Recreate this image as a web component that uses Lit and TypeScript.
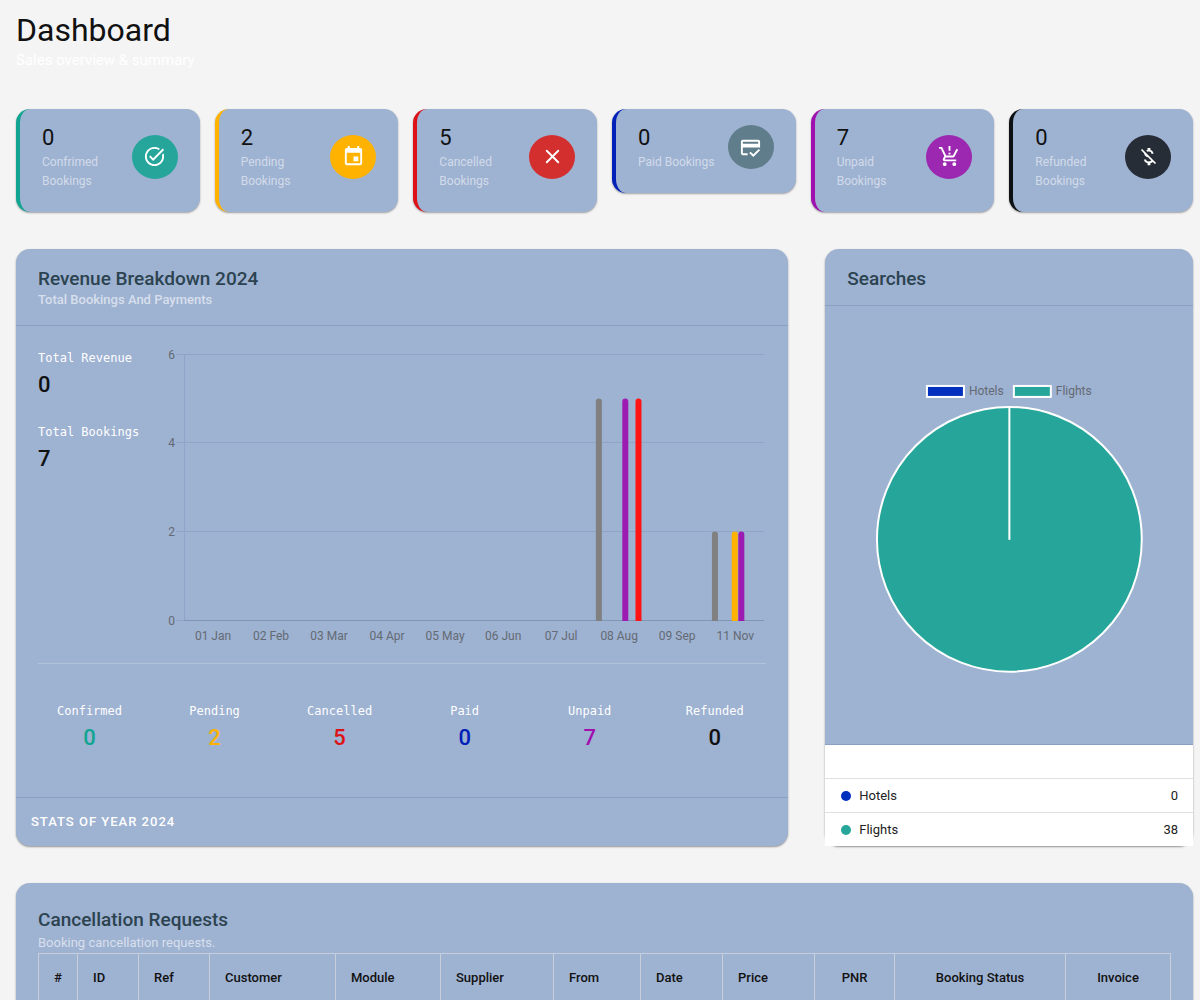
import { LitElement, html, svg, css } from "lit";
import { customElement, property } from "lit/decorators.js";
import { classMap } from "lit/directives/class-map.js";

type Tone = "teal" | "amber" | "red" | "blue" | "purple" | "black";

interface Summary {
  tone: Tone;
  value: number;
  label: string;
  title: string;
}

const SUMMARY: Summary[] = [
  { tone: "teal", value: 0, label: "Confrimed Bookings", title: "Confirmed" },
  { tone: "amber", value: 2, label: "Pending Bookings", title: "Pending" },
  { tone: "red", value: 5, label: "Cancelled Bookings", title: "Cancelled" },
  { tone: "blue", value: 0, label: "Paid Bookings", title: "Paid" },
  { tone: "purple", value: 7, label: "Unpaid Bookings", title: "Unpaid" },
  { tone: "black", value: 0, label: "Refunded Bookings", title: "Refunded" },
];

const ICONS = {
  teal: svg`<path d="M22 5.18L10.59 16.6l-4.24-4.24 1.41-1.41 2.83 2.83 10-10L22 5.18zm-2.21 5.04c.13.57.21 1.17.21 1.78 0 4.42-3.58 8-8 8s-8-3.58-8-8 3.58-8 8-8c1.58 0 3.04.46 4.28 1.25l1.44-1.44C16.1 2.67 14.13 2 12 2 6.48 2 2 6.48 2 12s4.48 10 10 10 10-4.48 10-10c0-1.19-.22-2.33-.6-3.39l-1.61 1.61z"/>`,
  amber: svg`<path d="M17 12h-5v5h5v-5zM16 1v2H8V1H6v2H5c-1.11 0-1.99.9-1.99 2L3 19c0 1.1.89 2 2 2h14c1.1 0 2-.9 2-2V5c0-1.1-.9-2-2-2h-1V1h-2zm3 18H5V8h14v11z"/>`,
  red: svg`<path d="M6 6L18 18M18 6L6 18" fill="none" stroke="currentColor" stroke-width="2" stroke-linecap="round"/>`,
  blue: svg`<path d="M20 4H4c-1.11 0-1.99.89-1.99 2L2 18c0 1.11.89 2 2 2h5v-2H4v-6h18V6c0-1.11-.89-2-2-2zm0 4H4V6h16v2zm-5.07 11.17l-2.83-2.83-1.41 1.41L14.93 22 22 14.93l-1.41-1.41-5.66 5.65z"/>`,
  purple: svg`<path d="M13 10h-2V8h2v2zm0-4h-2V1h2v5zM7 18c-1.1 0-1.99.9-1.99 2S5.9 22 7 22s2-.9 2-2-.9-2-2-2zm10 0c-1.1 0-1.99.9-1.99 2s.89 2 1.99 2 2-.9 2-2-.9-2-2-2zm-8.9-5h7.45c.75 0 1.41-.41 1.75-1.03L21 4.96 19.25 4l-3.7 7H8.53L4.27 2H1v2h2l3.6 7.59-1.35 2.44C4.52 15.37 5.48 17 7 17h12v-2H7l1.1-2z"/>`,
  black: svg`<path d="M12.5 6.9c1.78 0 2.44.85 2.5 2.1h2.21c-.07-1.72-1.12-3.3-3.21-3.81V3h-3v2.16c-.53.12-1.03.3-1.48.54l1.47 1.47c.41-.17.91-.27 1.51-.27zM5.33 4.06L4.06 5.33 7.5 8.77c0 2.08 1.56 3.21 3.91 3.91l3.51 3.51c-.34.48-1.05.91-2.42.91-2.06 0-2.87-.92-2.98-2.1h-2.2c.12 2.19 1.76 3.42 3.68 3.83V21h3v-2.15c.96-.18 1.82-.55 2.45-1.12l2.22 2.22 1.27-1.27L5.33 4.06z"/>`,
};

@customElement("summary-card")
export class SummaryCard extends LitElement {
  @property() tone: Tone = "teal";
  @property() label = "";
  @property({ type: Number }) value = 0;

  static styles = css`
    :host {
      display: block;
    }
    .card {
      display: flex;
      align-items: center;
      padding: 13px 22px 21px;
      border-left: 4px solid var(--accent);
      border-radius: 14px;
      background: #9eb2d2;
      box-shadow: 0 1px 2px rgba(0, 0, 0, 0.35);
    }
    .text {
      flex: 1;
      min-width: 0;
      padding-right: 12px;
    }
    .value {
      font-size: 22px;
      line-height: 31px;
      color: #111;
    }
    .label {
      font-size: 12px;
      line-height: 19px;
      color: rgba(255, 255, 255, 0.55);
    }
    .badge {
      flex: none;
      display: grid;
      place-items: center;
      width: 46px;
      height: 44px;
      border-radius: 50%;
      background: var(--disc);
      color: #fff;
    }
    .icon {
      width: 23px;
      height: 23px;
      fill: currentColor;
    }
    .teal { --accent: #10a590; --disc: #26a69a; }
    .amber { --accent: #ffb300; --disc: #ffb300; }
    .red { --accent: #dd1216; --disc: #d32f2f; }
    .blue { --accent: #0020b8; --disc: #607d8b; }
    .purple { --accent: #a010ae; --disc: #9c27b0; }
    .black { --accent: #0e1113; --disc: #262d36; }
  `;

  render() {
    return html`
      <div class=${classMap({ card: true, [this.tone]: true })}>
        <div class="text">
          <div class="value">${this.value}</div>
          <div class="label">${this.label}</div>
        </div>
        <div class="badge">
          <svg class="icon" viewBox="0 0 24 24" aria-hidden="true">${ICONS[this.tone]}</svg>
        </div>
      </div>
    `;
  }
}

const MONTHS = ["01 Jan", "02 Feb", "03 Mar", "04 Apr", "05 May", "06 Jun", "07 Jul", "08 Aug", "09 Sep", "11 Nov"];

// Each bar: month index, slot within the month (0-6), value, colour.
const BARS = [
  { month: 7, slot: 0, value: 5, color: "#808080" },
  { month: 7, slot: 4, value: 5, color: "#9c1bb0" },
  { month: 7, slot: 6, value: 5, color: "#ff1414" },
  { month: 9, slot: 0, value: 2, color: "#808080" },
  { month: 9, slot: 3, value: 2, color: "#ffb300" },
  { month: 9, slot: 4, value: 2, color: "#9c1bb0" },
];

@customElement("revenue-chart")
export class RevenueChart extends LitElement {
  static styles = css`
    :host {
      display: block;
    }
    .chart {
      display: block;
      width: 100%;
      height: auto;
    }
    .line {
      stroke: #8fa4c6;
      stroke-width: 1;
    }
    .base {
      stroke: #8195b4;
    }
    .tick {
      font-size: 12px;
      fill: #646a73;
    }
    .end {
      text-anchor: end;
    }
    .mid {
      text-anchor: middle;
    }
  `;

  render() {
    const left = 24;
    const bottom = 281;
    const unit = 44.4;
    const step = 58;
    const y = (v: number) => Math.round(bottom - v * unit) - 0.5;
    return html`
      <svg class="chart" viewBox="0 0 606 310" role="img" aria-label="Bookings by month">
        ${[6, 4, 2, 0].map(
          (v) => svg`
            <line class="line" x1="16" x2="604" y1=${y(v)} y2=${y(v)} />
            <text class="tick end" x="15" y=${y(v) + 4}>${v}</text>`
        )}
        <line class="line" x1="24.5" x2="24.5" y1=${y(6)} y2=${y(0)} />
        <line class="line base" x1=${left} x2="604" y1=${y(0)} y2=${y(0)} />
        ${MONTHS.map(
          (m, i) => svg`<text class="tick mid" x=${left + step * (i + 0.5)} y="300">${m}</text>`
        )}
        ${BARS.map((b) => {
          const x = left + b.month * step + 5.7 + b.slot * 6.6;
          const top = y(b.value);
          return svg`<path fill=${b.color} d="M${x} ${y(0) + 0.5}V${top + 3}a3 3 0 0 1 3-3a3 3 0 0 1 3 3V${y(0) + 0.5}z" />`;
        })}
      </svg>
    `;
  }
}

@customElement("search-pie")
export class SearchPie extends LitElement {
  static styles = css`
    :host {
      display: block;
    }
    .pie {
      display: block;
      width: 100%;
      height: auto;
    }
    .key {
      stroke: #fff;
      stroke-width: 2;
    }
    .name {
      font-size: 12px;
      fill: #646a73;
    }
    .hotels {
      fill: #0030bd;
    }
    .flights {
      fill: #26a69a;
    }
  `;

  render() {
    return html`
      <svg class="pie" viewBox="0 0 368 438" role="img" aria-label="Hotels 0, Flights 38">
        <rect class="key hotels" x="102" y="80" width="37" height="11" />
        <text class="name" x="144" y="89">Hotels</text>
        <rect class="key flights" x="189" y="80" width="37" height="11" />
        <text class="name" x="231" y="89">Flights</text>
        <circle class="key flights" cx="184.5" cy="233.5" r="132.5" />
        <path class="key" d="M184.5 101V234" />
      </svg>
    `;
  }
}

const COLUMNS = [
  { name: "#", width: 39, centered: true },
  { name: "ID", width: 61 },
  { name: "Ref", width: 71 },
  { name: "Customer", width: 126 },
  { name: "Module", width: 105 },
  { name: "Supplier", width: 113 },
  { name: "From", width: 87 },
  { name: "Date", width: 82 },
  { name: "Price", width: 92 },
  { name: "PNR", width: 80, centered: true },
  { name: "Booking Status", width: 171, centered: true },
  { name: "Invoice", width: 105, centered: true },
];

@customElement("app-root")
export class AppRoot extends LitElement {
  static styles = css`
    :host {
      display: block;
      font-family: Roboto, "Liberation Sans", sans-serif;
      color: #111;
    }
    .page {
      box-sizing: border-box;
      height: 100vh;
      overflow-y: auto;
      scrollbar-width: none;
      padding: 12px 7px 37px 16px;
      background: #f4f4f4;
    }
    h1,
    h2,
    p,
    ul {
      margin: 0;
      padding: 0;
      font-weight: 400;
    }
    .heading {
      font-size: 32px;
      line-height: 36px;
    }
    .tagline {
      font-size: 15px;
      line-height: 25px;
      color: #fff;
    }
    .cards {
      display: grid;
      grid-template-columns: repeat(6, minmax(0, 1fr));
      align-items: start;
      gap: 15px;
      margin-top: 36px;
    }
    .panels {
      display: grid;
      grid-template-columns: minmax(0, 21fr) minmax(0, 10fr);
      gap: 37px;
      margin: 37px 0;
    }
    .panel {
      display: flex;
      flex-direction: column;
      border-radius: 14px;
      background: #9eb2d2;
      box-shadow: 0 1px 2px rgba(0, 0, 0, 0.4);
    }
    .head {
      padding: 18px 22px 15px;
      border-bottom: 1px solid #8b9fc2;
    }
    .title {
      font-size: 19px;
      line-height: 23px;
      font-weight: 500;
      color: #2c4350;
    }
    .sub {
      font-size: 13px;
      line-height: 20px;
      color: rgba(255, 255, 255, 0.6);
    }
    .medium {
      font-weight: 500;
    }
    .body {
      flex: 1;
      padding: 14px 11px 0;
    }
    .overview {
      display: grid;
      grid-template-columns: 122px minmax(0, 1fr);
      margin: 0 11px;
      padding-bottom: 13px;
      border-bottom: 1px solid #b3c3dc;
    }
    .totals {
      padding-top: 8px;
    }
    .total {
      margin-bottom: 20px;
    }
    .caption {
      font-family: "DejaVu Sans Mono", "Liberation Mono", monospace;
      font-size: 12px;
      line-height: 20px;
      white-space: nowrap;
      color: #fff;
    }
    .number {
      font-size: 22px;
      line-height: 34px;
      font-weight: 500;
    }
    .breakdown {
      display: grid;
      grid-template-columns: repeat(6, minmax(0, 1fr));
      padding: 37px 0 42px;
      text-align: center;
    }
    .teal { color: #10a590; }
    .amber { color: #ffb300; }
    .red { color: #dd1216; }
    .blue { color: #0020b8; }
    .purple { color: #a010ae; }
    .black { color: #111; }
    .foot {
      padding: 14px 15px;
      border-top: 1px solid #8b9fc2;
      font-size: 13px;
      line-height: 20px;
      font-weight: 500;
      letter-spacing: 1px;
      color: #fff;
    }
    .pie-area {
      border-bottom: 1px solid #8b9fc2;
    }
    .list {
      flex: 1;
      display: flex;
      flex-direction: column;
      justify-content: flex-end;
      background: #fff;
      list-style: none;
    }
    .item {
      display: flex;
      align-items: center;
      gap: 8px;
      padding: 0 15px 0 16px;
      border-top: 1px solid #e0e0e0;
      font-size: 13px;
      line-height: 33px;
      color: #222;
    }
    .dot {
      width: 10px;
      height: 10px;
      border-radius: 50%;
      background: #26a69a;
    }
    .dot-hotels {
      background: #002ebd;
    }
    .count {
      margin-left: auto;
    }
    .requests {
      padding: 25px 22px;
    }
    .intro {
      display: grid;
      gap: 2px;
    }
    .table {
      width: 100%;
      table-layout: fixed;
      border-collapse: collapse;
    }
    .cell {
      box-sizing: border-box;
      height: 47px;
      padding: 0 15px;
      border: 1px solid #c9cfda;
      font-size: 13px;
      font-weight: 500;
      text-align: left;
      white-space: nowrap;
    }
    .centered {
      padding: 0;
      text-align: center;
    }
  `;

  render() {
    return html`
      <main class="page">
        <h1 class="heading">Dashboard</h1>
        <p class="tagline">Sales overview &amp; summary</p>

        <section class="cards">
          ${SUMMARY.map(
            (s) => html`<summary-card .tone=${s.tone} .value=${s.value} .label=${s.label}></summary-card>`
          )}
        </section>

        <div class="panels">
          <section class="panel">
            <header class="head">
              <h2 class="title">Revenue Breakdown 2024</h2>
              <p class="sub medium">Total Bookings And Payments</p>
            </header>
            <div class="body">
              <div class="overview">
                <div class="totals">
                  <div class="total">
                    <div class="caption">Total Revenue</div>
                    <div class="number">0</div>
                  </div>
                  <div class="total">
                    <div class="caption">Total Bookings</div>
                    <div class="number">7</div>
                  </div>
                </div>
                <revenue-chart></revenue-chart>
              </div>
              <div class="breakdown">
                ${SUMMARY.map(
                  (s) => html`
                    <div>
                      <div class="caption">${s.title}</div>
                      <div class=${classMap({ number: true, [s.tone]: true })}>${s.value}</div>
                    </div>
                  `
                )}
              </div>
            </div>
            <footer class="foot">STATS OF YEAR 2024</footer>
          </section>

          <section class="panel">
            <header class="head">
              <h2 class="title">Searches</h2>
            </header>
            <search-pie class="pie-area"></search-pie>
            <ul class="list">
              <li class="item">
                <span class="dot dot-hotels"></span><span>Hotels</span><span class="count">0</span>
              </li>
              <li class="item">
                <span class="dot"></span><span>Flights</span><span class="count">38</span>
              </li>
            </ul>
          </section>
        </div>

        <section class="panel requests">
          <div class="intro">
            <h2 class="title">Cancellation Requests</h2>
            <p class="sub">Booking cancellation requests.</p>
          </div>
          <table class="table">
            <colgroup>
              ${COLUMNS.map((c) => html`<col style="width: ${c.width}px" />`)}
            </colgroup>
            <thead>
              <tr>
                ${COLUMNS.map(
                  (c) => html`<th scope="col" class=${classMap({ cell: true, centered: !!c.centered })}>${c.name}</th>`
                )}
              </tr>
            </thead>
          </table>
        </section>
      </main>
    `;
  }
}
